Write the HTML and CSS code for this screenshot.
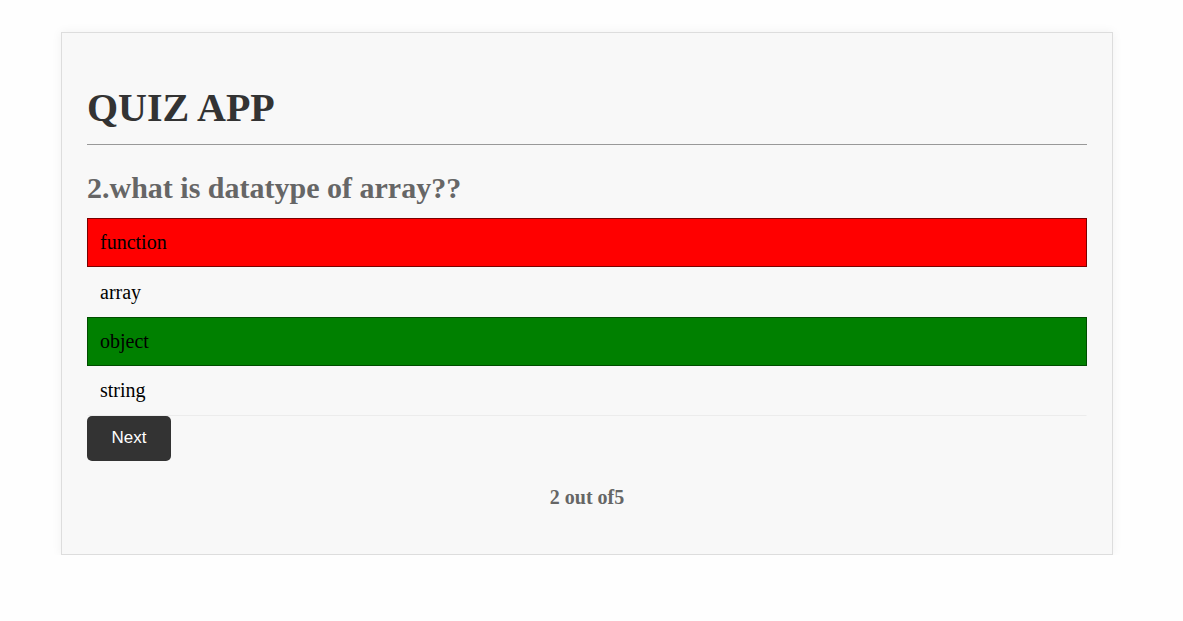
FILE: index.html
```html
<!DOCTYPE html>
<html>
<head>
<meta charset="utf-8">
<title>Quiz App</title>
<link rel="stylesheet" href="styles.css">
</head>
<body>
<div class="app">
  <h1 class="title">QUIZ APP</h1>
  <hr class="divider">
  <h2 class="question">2.what is datatype of array??</h2>
  <ul class="options">
    <li class="option wrong">function</li>
    <li class="option">array</li>
    <li class="option correct">object</li>
    <li class="option last">string</li>
  </ul>
  <button class="next-btn">Next</button>
  <p class="progress">2 out of5</p>
</div>
</body>
</html>
```
FILE: styles.css
```css
html, body {
  margin: 0;
  padding: 0;
  background: #fefefe;
}
body {
  font-family: "Liberation Serif", "Times New Roman", serif;
  padding-top: 32px;
}
.app {
  width: 1000px;
  margin-left: 61px;
  padding: 25px 25px 25px 25px;
  background: #f8f8f8;
  border: 1px solid #dddddd;
  box-shadow: 0 0 10px rgba(0, 0, 0, 0.06);
}
.title {
  font-size: 40px;
  font-weight: bold;
  color: #333333;
  margin: 27px 0 0 0;
  line-height: 46px;
}
.divider {
  border: none;
  border-top: 1px solid #999999;
  margin: 13px 0 0 0;
  height: 0;
}
.question {
  font-size: 30px;
  font-weight: bold;
  color: #666666;
  margin: 25px 0 0 0;
  line-height: 35px;
}
.options {
  list-style: none;
  margin: 13px 0 0 0;
  padding: 0;
}
.option {
  box-sizing: border-box;
  height: 49.4px;
  display: flex;
  align-items: center;
  padding: 0 12px;
  font-size: 20px;
  color: #000000;
  border: 1px solid transparent;
}
.option.wrong {
  background: #ff0000;
  border-color: #7a0000;
}
.option.correct {
  background: #008000;
  border-color: #004d00;
}
.option.last {
  border-bottom-color: #ececec;
}
.next-btn {
  display: block;
  margin-top: 0;
  width: 84px;
  height: 45px;
  background: #333333;
  color: #ffffff;
  border: none;
  border-radius: 5px;
  font-family: "Liberation Sans", Arial, sans-serif;
  font-size: 17px;
  padding: 0;
}
.progress {
  text-align: center;
  font-size: 20px;
  font-weight: bold;
  color: #666666;
  margin: 25px 0 0 0;
  line-height: 22px;
  padding-bottom: 21px;
}
```
